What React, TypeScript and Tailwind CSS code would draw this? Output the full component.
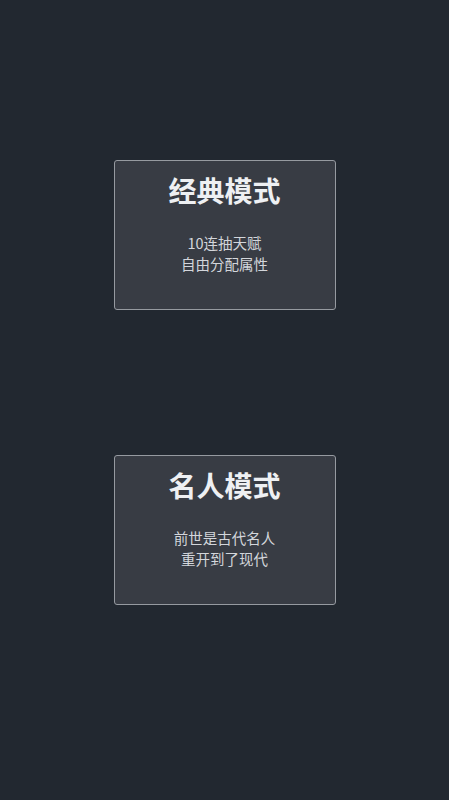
const MODES = [
  { title: '经典模式', lines: ['10连抽天赋', '自由分配属性'] },
  { title: '名人模式', lines: ['前世是古代名人', '重开到了现代'] },
]

function ModeCard({ title, lines }: { title: string; lines: string[] }) {
  return (
    <button
      type="button"
      className="flex h-[150px] w-[222px] flex-col items-center rounded-[3px] border border-[#969aa0] bg-[#383c44] pt-[11px] text-center"
    >
      <h2 className="text-[28px] font-bold leading-[36px] text-[#eef0f3]">{title}</h2>
      <div className="mt-[24px] text-[14.5px] leading-[21px] text-[#d3d6db]">
        {lines.map((l) => (
          <p key={l}>{l}</p>
        ))}
      </div>
    </button>
  )
}

export default function App() {
  return (
    <div
      className="flex min-h-[800px] flex-col items-center gap-[145px] bg-[#222830] pt-[160px]"
      style={{ fontFamily: '"Noto Sans CJK SC", "Noto Sans", sans-serif' }}
    >
      {MODES.map((m) => (
        <ModeCard key={m.title} title={m.title} lines={m.lines} />
      ))}
    </div>
  )
}
